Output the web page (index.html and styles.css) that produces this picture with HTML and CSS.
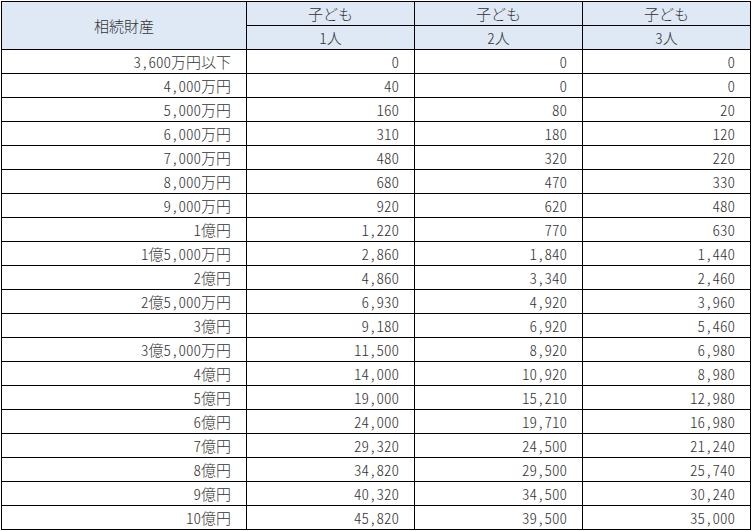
FILE: index.html
```html
<!DOCTYPE html>
<html lang="ja">
<head>
<meta charset="utf-8">
<title>相続税額表</title>
<link rel="stylesheet" href="styles.css">
</head>
<body>
<table class="tax">
  <colgroup>
    <col class="c-asset">
    <col class="c-num">
    <col class="c-num">
    <col class="c-num">
  </colgroup>
  <thead>
    <tr>
      <th class="h-asset" rowspan="2">相続財産</th>
      <th>子ども</th>
      <th>子ども</th>
      <th>子ども</th>
    </tr>
    <tr>
      <th>1人</th>
      <th>2人</th>
      <th>3人</th>
    </tr>
  </thead>
  <tbody>
    <tr><td>3,600万円以下</td><td>0</td><td>0</td><td>0</td></tr>
    <tr><td>4,000万円</td><td>40</td><td>0</td><td>0</td></tr>
    <tr><td>5,000万円</td><td>160</td><td>80</td><td>20</td></tr>
    <tr><td>6,000万円</td><td>310</td><td>180</td><td>120</td></tr>
    <tr><td>7,000万円</td><td>480</td><td>320</td><td>220</td></tr>
    <tr><td>8,000万円</td><td>680</td><td>470</td><td>330</td></tr>
    <tr><td>9,000万円</td><td>920</td><td>620</td><td>480</td></tr>
    <tr><td>1億円</td><td>1,220</td><td>770</td><td>630</td></tr>
    <tr><td>1億5,000万円</td><td>2,860</td><td>1,840</td><td>1,440</td></tr>
    <tr><td>2億円</td><td>4,860</td><td>3,340</td><td>2,460</td></tr>
    <tr><td>2億5,000万円</td><td>6,930</td><td>4,920</td><td>3,960</td></tr>
    <tr><td>3億円</td><td>9,180</td><td>6,920</td><td>5,460</td></tr>
    <tr><td>3億5,000万円</td><td>11,500</td><td>8,920</td><td>6,980</td></tr>
    <tr><td>4億円</td><td>14,000</td><td>10,920</td><td>8,980</td></tr>
    <tr><td>5億円</td><td>19,000</td><td>15,210</td><td>12,980</td></tr>
    <tr><td>6億円</td><td>24,000</td><td>19,710</td><td>16,980</td></tr>
    <tr><td>7億円</td><td>29,320</td><td>24,500</td><td>21,240</td></tr>
    <tr><td>8億円</td><td>34,820</td><td>29,500</td><td>25,740</td></tr>
    <tr><td>9億円</td><td>40,320</td><td>34,500</td><td>30,240</td></tr>
    <tr><td>10億円</td><td>45,820</td><td>39,500</td><td>35,000</td></tr>
  </tbody>
</table>
</body>
</html>
```
FILE: styles.css
```css
html, body {
  margin: 0;
  padding: 0;
  background: #ffffff;
}

.tax {
  margin: 1px 0 0 1px;
  border-collapse: separate;
  border-spacing: 0;
  table-layout: fixed;
  width: 750px;
  border-top: 1px solid #000;
  border-left: 1px solid #000;
  font-family: "Noto Sans CJK JP", "Noto Sans", sans-serif;
  font-size: 15px;
  font-weight: 300;
  font-feature-settings: "hwid";
  color: #333;
}

.c-asset { width: 245px; }
.c-num { width: 168px; }

.tax th,
.tax td {
  box-sizing: border-box;
  border-right: 1px solid #000;
  border-bottom: 1px solid #000;
  height: 24px;
  padding: 0 15px 0 0;
  line-height: 22px;
  vertical-align: middle;
  white-space: nowrap;
  overflow: hidden;
}

.tax th {
  background: #dfe9f5;
  font-weight: 300;
  text-align: center;
  padding: 0;
}

.tax th.h-asset {
  height: 48px;
}

.tax td {
  text-align: right;
}
```
